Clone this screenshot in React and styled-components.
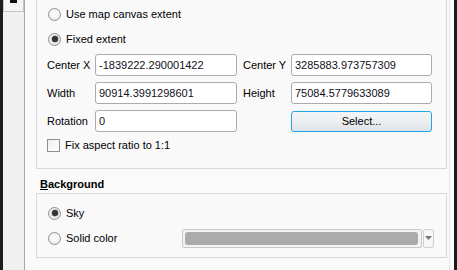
import React from 'react';
import styled, { createGlobalStyle } from 'styled-components';

const GlobalStyle = createGlobalStyle`
  html, body { margin: 0; padding: 0; background: #fafafa; }
  body { font-family: "Liberation Sans", Arial, sans-serif; font-size: 11px; color: #000; }
`;

export default function App() {
    return (
        <Page>
            <GlobalStyle />
            <Gutter />
            <SidePanel>
                <ToolButton><Glyph /></ToolButton>
            </SidePanel>

            <Main>
                <GroupBox $openTop>
                    <OptionRow><Radio /><span>Use map canvas extent</span></OptionRow>
                    <OptionRow><Radio $checked /><span>Fixed extent</span></OptionRow>

                    <FieldGrid>
                        <FieldLabel>Center X</FieldLabel>
                        <TextInput>-1839222.290001422</TextInput>
                        <FieldLabel $second>Center Y</FieldLabel>
                        <TextInput>3285883.973757309</TextInput>

                        <FieldLabel>Width</FieldLabel>
                        <TextInput>90914.3991298601</TextInput>
                        <FieldLabel $second>Height</FieldLabel>
                        <TextInput>75084.5779633089</TextInput>

                        <FieldLabel>Rotation</FieldLabel>
                        <TextInput>0</TextInput>
                        <span />
                        <PushButton>Select...</PushButton>
                    </FieldGrid>

                    <CheckRow><CheckBox /><span>Fix aspect ratio to 1:1</span></CheckRow>
                </GroupBox>

                <SectionTitle><u>B</u>ackground</SectionTitle>

                <GroupBox>
                    <OptionRow><Radio $checked /><span>Sky</span></OptionRow>
                    <OptionRow>
                        <Radio /><span>Solid color</span>
                        <ColorButton><Swatch /></ColorButton>
                        <ArrowButton>
                            <svg width="7" height="4" viewBox="0 0 7 4">
                                <path d="M0 0 H7 L3.5 4 Z" fill="#777" />
                            </svg>
                        </ArrowButton>
                    </OptionRow>
                </GroupBox>
            </Main>

            <RightRail />
            <Gutter />
        </Page>
    );
}

const borderGray = '#d9d9d9';
const inputBorder = '#a9abb0';

const Page = styled.div`
    display: flex;
    width: 457px;
    height: 270px;
    overflow: hidden;
    background: #fafafa;
`;

const Gutter = styled.div`
    width: 3px;
    flex: none;
    background: #1c1c1c;
`;

const SidePanel = styled.div`
    width: 21px;
    flex: none;
    background: #f0f0f0;
    border-right: 1px solid #a8a8a8;
`;

const ToolButton = styled.div`
    height: 11px;
    border: 1px solid #c4c4c4;
    border-top: none;
    background: #f4f4f4;
    display: flex;
    justify-content: center;
`;

const Glyph = styled.div`
    width: 7px;
    height: 3px;
    background: #111;
`;

const Main = styled.div`
    flex: none;
    width: 411px;
    padding: 0 2px 0 11px;
    display: flex;
    flex-direction: column;
`;

const RightRail = styled.div`
    flex: 1;
    border-left: 1px solid #e6e6e6;
    background: #fcfcfc;
`;

const GroupBox = styled.div`
    border: 1px solid ${borderGray};
    border-top: ${p => (p.$openTop ? 'none' : `1px solid ${borderGray}`)};
    padding: ${p => (p.$openTop ? '4px 12px 13px 10px' : '9px 12px 9px 10px')};
    display: flex;
    flex-direction: column;
    gap: 6px;
    background: #f9f9f9;
`;

const OptionRow = styled.div`
    height: 20px;
    display: flex;
    align-items: center;
    padding-left: 1px;

    & + & { margin-top: -1px; }
`;

const Radio = styled.span`
    width: 13px;
    height: 13px;
    box-sizing: border-box;
    border-radius: 50%;
    border: 1px solid #8f8f8f;
    background: radial-gradient(circle at 50% 45%, #ffffff 0%, #f2f2f2 55%, #dcdcdc 100%);
    margin-right: 5px;
    display: inline-flex;
    align-items: center;
    justify-content: center;
    flex: none;

    &::after {
        content: '';
        width: 6px;
        height: 6px;
        border-radius: 50%;
        background: ${p => (p.$checked ? '#333' : 'transparent')};
        box-shadow: ${p => (p.$checked ? '0 0 1px 0.5px #8a8a8a' : 'none')};
    }
`;

const FieldGrid = styled.div`
    display: grid;
    grid-template-columns: 48px 142px 54px 141px;
    grid-auto-rows: 22px;
    row-gap: 6px;
    align-items: center;
    margin-top: -1px;
`;

const FieldLabel = styled.span`
    padding-left: ${p => (p.$second ? '6px' : '0')};
    white-space: nowrap;
`;

const TextInput = styled.div`
    height: 22px;
    box-sizing: border-box;
    border: 1px solid ${inputBorder};
    border-radius: 3px;
    background: #fff;
    padding: 0 3px;
    display: flex;
    align-items: center;
    color: #101018;
`;

const PushButton = styled.div`
    height: 21px;
    box-sizing: border-box;
    border: 1px solid #1ea4e9;
    border-radius: 3px;
    background: linear-gradient(#f4f5f6 0%, #eceef0 50%, #dfe3e7 100%);
    display: flex;
    align-items: center;
    justify-content: center;
`;

const CheckRow = styled.div`
    height: 20px;
    display: flex;
    align-items: center;
    margin-top: -3px;
`;

const CheckBox = styled.span`
    width: 13px;
    height: 13px;
    box-sizing: border-box;
    border: 1px solid #8f8f8f;
    background: linear-gradient(135deg, #f0f0f0, #ffffff);
    margin-right: 5px;
    flex: none;
`;

const SectionTitle = styled.div`
    font-weight: bold;
    height: 12px;
    line-height: 12px;
    padding-left: 4px;
    margin: 9px 0 3px;
`;

const ColorButton = styled.div`
    margin-left: auto;
    width: 240px;
    height: 19px;
    box-sizing: border-box;
    border: 1px solid #c9c9c9;
    border-radius: 2px;
    background: #f3f3f3;
    padding: 2px 3px 2px 2px;
    display: flex;
`;

const Swatch = styled.div`
    flex: 1;
    border-radius: 3px;
    background: #ababab;
`;

const ArrowButton = styled.div`
    width: 11px;
    height: 19px;
    margin-left: 1px;
    box-sizing: border-box;
    border: 1px solid #cfcfcf;
    border-radius: 2px;
    background: #f6f6f6;
    display: flex;
    align-items: center;
    justify-content: center;
`;
